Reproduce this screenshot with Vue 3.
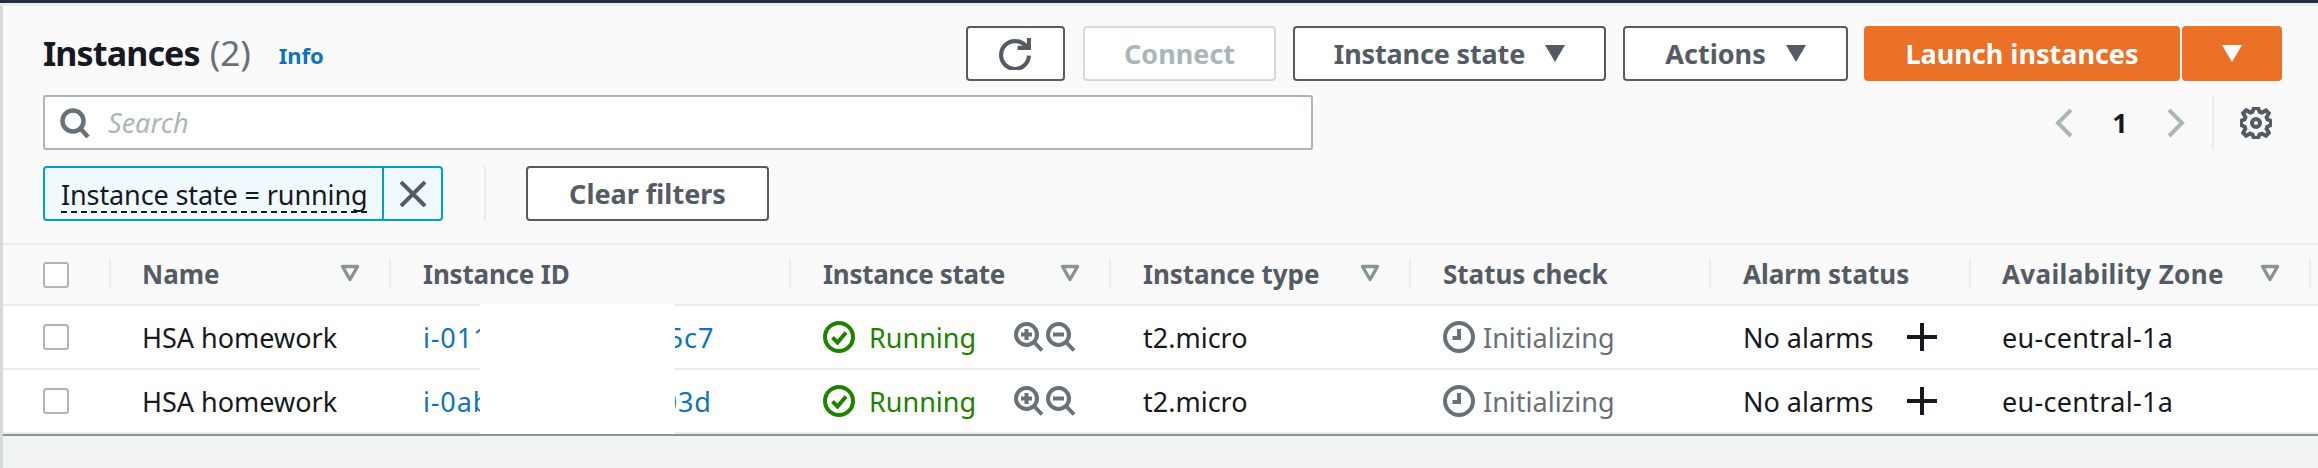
<script setup>
const columns = [
  { label: 'Name', filter: true, spacing: 0 },
  { label: 'Instance ID', filter: false, spacing: -0.2 },
  { label: 'Instance state', filter: true, spacing: -0.3 },
  { label: 'Instance type', filter: true, spacing: -0.1 },
  { label: 'Status check', filter: false, spacing: 0 },
  { label: 'Alarm status', filter: false, spacing: 0 },
  { label: 'Availability Zone', filter: true, spacing: 0.35 }
]
const rows = [
  { name: 'HSA homework', id: 'i-0110a7c3e94d1b5c7' },
  { name: 'HSA homework', id: 'i-0ab52f8d17c6e903d' }
]
</script>

<template>
  <div class="page">
    <div class="topbar"></div>
    <div class="main">
      <section class="panel">
        <div class="head-row">
          <div class="title-wrap">
            <h1 class="title">Instances <span class="count">(2)</span></h1>
            <a class="info">Info</a>
          </div>
          <div class="actions">
            <button class="btn refresh" aria-label="Refresh">
              <svg class="refresh-icon" viewBox="0 0 32 32" fill="none" stroke="currentColor" stroke-width="4">
                <path d="M29 18A13.5 13.5 0 1 1 16 4c5 0 8.500 2 11 6" />
                <path d="M18 10.500h11V1" />
              </svg>
            </button>
            <button class="btn connect" disabled>Connect</button>
            <button class="btn state"><span class="state-label">Instance state</span> <i class="caret"></i></button>
            <button class="btn act">Actions <i class="caret"></i></button>
            <div class="launch-group">
              <button class="btn launch">Launch instances</button>
              <button class="btn launch-more" aria-label="More"><i class="caret white"></i></button>
            </div>
          </div>
        </div>

        <div class="search-row">
          <div class="search">
            <svg class="search-icon" viewBox="0 0 30 30" fill="none" stroke="currentColor" stroke-width="4.500">
              <circle cx="13" cy="13" r="10.500" />
              <path d="M20 20l8 9" />
            </svg>
            <span class="placeholder">Search</span>
          </div>
          <div class="pager">
            <svg class="chev" viewBox="0 0 18 30" fill="none" stroke="currentColor" stroke-width="4"><path d="M16 2L3 15l13 13" /></svg>
            <span class="page-no">1</span>
            <svg class="chev" viewBox="0 0 18 30" fill="none" stroke="currentColor" stroke-width="4"><path d="M2 2l13 13L2 28" /></svg>
            <span class="pager-div"></span>
            <svg class="gear" viewBox="0 0 16 16" fill="none" stroke="currentColor" stroke-width="2">
              <path d="M13.300 5.200l1.100-2.100L13 1.700l-2.100 1.100c-.3-.2-.7-.3-1.100-.4L9 .5H7l-.8 1.900c-.3.100-.7.200-1 .4L3.100 1.600 1.600 3.100l1.100 2.100c-.2.300-.3.700-.4 1L.5 7v2l1.800.8c.1.400.3.700.4 1.100l-1.100 2.100 1.400 1.400 2.100-1.100c.3.200.7.300 1.100.4L7 15.500h2l.8-1.800c.4-.1.700-.3 1.100-.4l2.100 1.100 1.400-1.400-1.100-2.100c.2-.3.300-.7.400-1.100L15.500 9V7l-1.800-.8c-.1-.3-.2-.7-.4-1z" />
              <circle cx="8" cy="8" r="2" />
            </svg>
          </div>
        </div>

        <div class="filter-row">
          <div class="token">
            <span class="token-label"><span class="token-text">Instance state = running</span></span>
            <span class="token-x">
              <svg viewBox="0 0 28 26" fill="none" stroke="currentColor" stroke-width="4"><path d="M2 1l24 24M26 1L2 25" /></svg>
            </span>
          </div>
          <span class="filter-div"></span>
          <button class="btn clear">Clear filters</button>
        </div>
      </section>

      <div class="table">
        <div class="row header">
          <div class="cell check-cell"><span class="checkbox"></span></div>
          <div v-for="c in columns" :key="c.label" class="cell head-cell">
            <span class="head-label" :style="{ letterSpacing: c.spacing + 'px' }">{{ c.label }}</span>
            <svg v-if="c.filter" class="filter" viewBox="0 0 20 18" fill="none" stroke="currentColor" stroke-width="3.400"><path d="M2.500 2.500h15l-7.500 13z" stroke-linejoin="round" /></svg>
          </div>
          <div class="cell"></div>
        </div>
        <div class="tbody">
          <div v-for="r in rows" :key="r.id" class="row body">
            <div class="cell check-cell"><span class="checkbox"></span></div>
            <div class="cell name-cell">{{ r.name }}</div>
            <div class="cell"><a class="link">{{ r.id }}</a></div>
            <div class="cell state-cell">
              <span class="ok">
                <svg class="status" viewBox="0 0 32 32" fill="none" stroke="currentColor" stroke-width="4">
                  <circle cx="16" cy="16" r="14" />
                  <path d="M9.500 16.500l5 5 8.500-10" />
                </svg>
                Running
              </span>
              <span class="zooms">
                <svg class="zoom" viewBox="0 0 30 30" fill="none" stroke="currentColor" stroke-width="4">
                  <circle cx="12.500" cy="12.500" r="10.500" />
                  <path d="M20 20l8 8.500" />
                  <path d="M7 12.500h11M12.500 7v11" />
                </svg>
                <svg class="zoom" viewBox="0 0 30 30" fill="none" stroke="currentColor" stroke-width="4">
                  <circle cx="12.500" cy="12.500" r="10.500" />
                  <path d="M20 20l8 8.500" />
                  <path d="M7 12.500h11" />
                </svg>
              </span>
            </div>
            <div class="cell">t2.micro</div>
            <div class="cell muted">
              <svg class="status" viewBox="0 0 32 32" fill="none" stroke="currentColor" stroke-width="4">
                <circle cx="16" cy="16" r="14" />
                <path d="M16 8v9H9.500" />
              </svg>
              <span class="init">Initializing</span>
            </div>
            <div class="cell alarm-cell">
              <span>No alarms</span>
              <svg class="plus" viewBox="0 0 30 28" fill="none" stroke="currentColor" stroke-width="4"><path d="M15 0v28M0 14h30" /></svg>
            </div>
            <div class="cell az-cell">eu-central-1a</div>
            <div class="cell"></div>
          </div>
          <div class="mask"></div>
        </div>
      </div>
    </div>
  </div>
</template>

<style>
html, body { margin: 0; background: #f2f3f3; }
</style>

<style scoped>
.page {
  height: 468px;
  overflow: hidden;
  background: #f2f3f3;
  font-family: "Noto Sans", sans-serif;
  font-size: 27px;
  color: #16191f;
}
.topbar {
  height: 3px;
  background: #232f3e;
  border-bottom: 3px solid #eaeded;
}
.main {
  border-left: 3px solid #d5dbdb;
  height: 462px;
}
.panel {
  background: #fafafa;
  height: 237px;
  padding: 20px 36px 0 40px;
  box-sizing: border-box;
}
.head-row {
  display: flex;
  justify-content: space-between;
  height: 55px;
}
.title-wrap {
  display: flex;
  align-items: center;
  height: 55px;
  margin-top: -1px;
}
.title {
  margin: 0;
  font-size: 34px;
  font-weight: 700;
  line-height: 55px;
  letter-spacing: -0.87px;
  word-spacing: 2px;
}
.count { font-weight: 400; color: #687078; font-size: 35px; letter-spacing: 0; }
.info {
  margin-left: 28px;
  color: #0f73bb;
  font-size: 22px;
  font-weight: 700;
  margin-top: 4px;
}
.actions { display: flex; gap: 17px; }
.btn {
  box-sizing: border-box;
  height: 55px;
  border: 2px solid #545b64;
  border-radius: 4px;
  background: #fff;
  color: #545b64;
  font-family: inherit;
  font-size: 27px;
  font-weight: 700;
  padding: 0;
  display: flex;
  align-items: center;
  justify-content: center;
  gap: 20px;
}
.refresh { width: 99px; margin-right: 1px; }
.refresh-icon { width: 33px; height: 33px; }
.connect { width: 193px; border-color: #d5dbdb; color: #aab7b8; }
.state { width: 313px; }
.state-label { letter-spacing: -0.15px; }
.act { width: 225px; }
.launch-group { display: flex; gap: 2px; margin-left: -1px; }
.launch { width: 316px; background: #eb7126; border-color: #eb7126; color: #fff; }
.launch-more { width: 100px; background: #eb7126; border-color: #eb7126; }
.caret {
  display: block;
  width: 0;
  height: 0;
  border-left: 10px solid transparent;
  border-right: 10px solid transparent;
  border-top: 17px solid #545b64;
}
.caret.white { border-top-color: #fff; }

.search-row {
  display: flex;
  justify-content: space-between;
  margin-top: 14px;
  height: 55px;
}
.search {
  box-sizing: border-box;
  width: 1270px;
  height: 55px;
  border: 2px solid #aab7b8;
  border-radius: 3px;
  background: #fff;
  display: flex;
  align-items: center;
  padding-left: 15px;
}
.search-icon { width: 30px; height: 30px; color: #687078; }
.placeholder {
  margin-left: 18px;
  font-style: italic;
  color: #aab7b8;
}
.pager { display: flex; align-items: center; }
.chev { width: 18px; height: 30px; color: #aab7b8; }
.page-no { width: 94px; text-align: center; font-weight: 700; }
.pager-div {
  width: 2px;
  height: 55px;
  background: #eaeded;
  margin: 0 26px 0 27px;
}
.gear { width: 32px; height: 32px; color: #545b64; margin-right: 10px; }

.filter-row {
  display: flex;
  align-items: center;
  margin-top: 16px;
  height: 55px;
}
.token {
  box-sizing: border-box;
  width: 400px;
  height: 55px;
  border: 2px solid #00a1c9;
  border-radius: 4px;
  background: #f1faff;
  display: flex;
}
.token-label {
  width: 339px;
  box-sizing: border-box;
  padding-left: 16px;
  display: flex;
  align-items: center;
  border-right: 2px solid #00a1c9;
}
.token-text {
  border-bottom: 2px dashed #16191f;
  line-height: 32px;
  margin-top: 4px;
  white-space: nowrap;
  letter-spacing: -0.12px;
}
.token-x {
  flex: 1;
  display: flex;
  align-items: center;
  justify-content: center;
  color: #545b64;
}
.token-x svg { width: 28px; height: 26px; }
.filter-div {
  width: 2px;
  height: 55px;
  background: #eaeded;
  margin: 0 40px 0 41px;
}
.clear { width: 243px; }

.table { background: #fff; border-top: 2px solid #eaeded; }
.row {
  display: grid;
  grid-template-columns: 106px 280px 400px 320px 300px 300px 260px 340px 1fr;
}
.header {
  height: 59px;
  background: #fafafa;
  border-bottom: 2px solid #eaeded;
  font-weight: 700;
  font-size: 26px;
  color: #545b64;
}
.tbody { position: relative; border-bottom: 2px solid #879596; }
.body { height: 62px; border-bottom: 2px solid #eaeded; }
.body:last-of-type { border-bottom: 0; }
.cell {
  display: flex;
  align-items: center;
  padding-left: 34px;
  position: relative;
  white-space: nowrap;
  min-width: 0;
}
.check-cell { padding-left: 40px; }
.name-cell { padding-left: 33px; }
.az-cell { padding-left: 33px; letter-spacing: 0.3px; }
.checkbox {
  display: block;
  box-sizing: border-box;
  width: 26px;
  height: 26px;
  border: 2px solid #aab7b8;
  border-radius: 3px;
  background: #fff;
}
.header .cell:not(:last-child)::after {
  content: "";
  position: absolute;
  right: -2px;
  top: 14px;
  width: 2px;
  height: 30px;
  background: #eaeded;
}
.head-cell { justify-content: space-between; padding-right: 29px; }
.head-label { margin-top: -2px; }
.head-cell:nth-child(2) .head-label,
.head-cell:nth-child(8) .head-label { margin-left: -1px; }
.filter { width: 20px; height: 18px; color: #879596; margin-top: -4px; }
.link { color: #0f73bb; letter-spacing: 0.85px; }
.state-cell { justify-content: space-between; padding-right: 33px; }
.ok { display: flex; align-items: center; gap: 14px; color: #1d8102; }
.status { width: 32px; height: 32px; flex: none; }
.zooms { display: flex; gap: 2px; color: #687078; }
.zoom { width: 30px; height: 30px; display: block; }
.muted { color: #687078; }
.init { margin-left: 8px; }
.alarm-cell { gap: 34px; }
.plus { width: 30px; height: 28px; color: #16191f; }
.mask {
  position: absolute;
  left: 477px;
  width: 195px;
  top: -2px;
  bottom: 0;
  background: #fff;
}
</style>
